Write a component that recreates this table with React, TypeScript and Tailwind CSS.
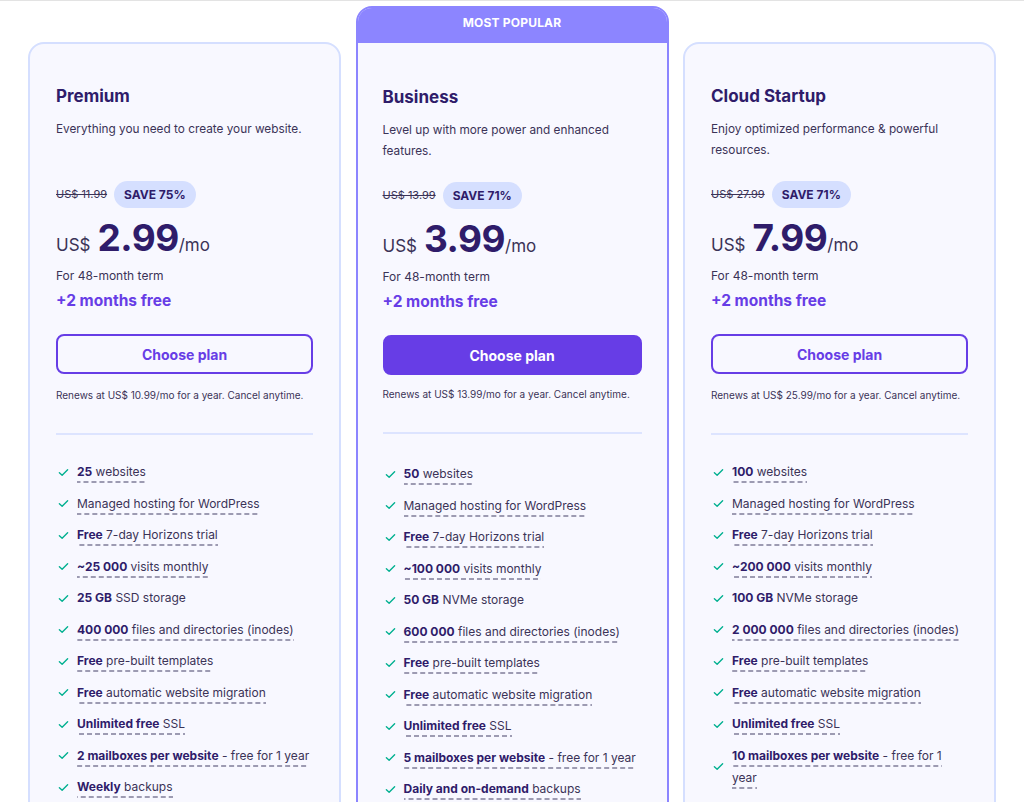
import React from "react";

type Feat = { b?: string; r?: string; u?: boolean };

type Plan = {
  name: string;
  desc: string;
  old: string;
  save: string;
  price: string;
  renew: string;
  features: Feat[];
  popular?: boolean;
};

const plans: Plan[] = [
  {
    name: "Premium",
    desc: "Everything you need to create your website.",
    old: "US$ 11.99",
    save: "SAVE 75%",
    price: "2.99",
    renew: "Renews at US$ 10.99/mo for a year. Cancel anytime.",
    features: [
      { b: "25", r: " websites", u: true },
      { r: "Managed hosting for WordPress", u: true },
      { b: "Free", r: " 7-day Horizons trial", u: true },
      { b: "~25 000", r: " visits monthly", u: true },
      { b: "25 GB", r: " SSD storage", u: false },
      { b: "400 000", r: " files and directories (inodes)", u: true },
      { b: "Free", r: " pre-built templates", u: true },
      { b: "Free", r: " automatic website migration", u: true },
      { b: "Unlimited free", r: " SSL", u: true },
      { b: "2 mailboxes per website", r: " - free for 1 year", u: true },
      { b: "Weekly", r: " backups", u: true },
    ],
  },
  {
    name: "Business",
    desc: "Level up with more power and enhanced features.",
    old: "US$ 13.99",
    save: "SAVE 71%",
    price: "3.99",
    renew: "Renews at US$ 13.99/mo for a year. Cancel anytime.",
    popular: true,
    features: [
      { b: "50", r: " websites", u: true },
      { r: "Managed hosting for WordPress", u: true },
      { b: "Free", r: " 7-day Horizons trial", u: true },
      { b: "~100 000", r: " visits monthly", u: true },
      { b: "50 GB", r: " NVMe storage", u: false },
      { b: "600 000", r: " files and directories (inodes)", u: true },
      { b: "Free", r: " pre-built templates", u: true },
      { b: "Free", r: " automatic website migration", u: true },
      { b: "Unlimited free", r: " SSL", u: true },
      { b: "5 mailboxes per website", r: " - free for 1 year", u: true },
      { b: "Daily and on-demand", r: " backups", u: true },
    ],
  },
  {
    name: "Cloud Startup",
    desc: "Enjoy optimized performance & powerful resources.",
    old: "US$ 27.99",
    save: "SAVE 71%",
    price: "7.99",
    renew: "Renews at US$ 25.99/mo for a year. Cancel anytime.",
    features: [
      { b: "100", r: " websites", u: true },
      { r: "Managed hosting for WordPress", u: true },
      { b: "Free", r: " 7-day Horizons trial", u: true },
      { b: "~200 000", r: " visits monthly", u: true },
      { b: "100 GB", r: " NVMe storage", u: false },
      { b: "2 000 000", r: " files and directories (inodes)", u: true },
      { b: "Free", r: " pre-built templates", u: true },
      { b: "Free", r: " automatic website migration", u: true },
      { b: "Unlimited free", r: " SSL", u: true },
      { b: "10 mailboxes per website", r: " - free for 1 year", u: true },
      { b: "Daily", r: " backups", u: true },
    ],
  },
];

function Check() {
  return (
    <svg width="11" height="11" viewBox="0 0 12 12" fill="none" className="shrink-0">
      <path d="M1.5 6.2 L4.5 9 L10.5 3" stroke="#00b090" strokeWidth="1.5" strokeLinecap="round" strokeLinejoin="round" />
    </svg>
  );
}

function Card({ p }: { p: Plan }) {
  const pop = !!p.popular;
  return (
    <div
      className={
        pop
          ? "w-[313px] shrink-0 rounded-[16px] border-2 border-[#8c85ff] bg-[#f8f8ff] overflow-hidden mt-[5px]"
          : "w-[313px] shrink-0 rounded-[16px] border-2 border-[#d5dfff] bg-[#f8f8ff] overflow-hidden mt-[41px]"
      }
    >
      {pop && (
        <div className="h-[35px] pb-[5px] bg-[#8c85ff] flex items-center justify-center text-white text-[12px] font-bold tracking-[0.2px]">
          MOST POPULAR
        </div>
      )}
      <div className={pop ? "px-[25px] pt-[42px]" : "px-[26px] pt-[40px]"}>
        <div className="text-[17px] leading-[24px] font-bold text-[#2f1c6a]">{p.name}</div>
        <div className="mt-[11px] h-[41px] text-[11.8px] leading-[21px] text-[#3b3357]">{p.desc}</div>
        <div className="mt-[21px] flex items-center gap-[7px]">
          <span className="text-[11px] line-through text-[#3b3357]">{p.old}</span>
          <span className="h-[27px] px-[10px] rounded-full bg-[#d5dfff] text-[12px] font-bold text-[#2f1c6a] flex items-center">
            {p.save}
          </span>
        </div>
        <div className="mt-[6px] flex items-baseline text-[#2f1c6a]">
          <span className="text-[17px] text-[#3b3357]">US$</span>
          <span className="ml-[7px] text-[37px] leading-[48px] font-bold tracking-[-0.5px]">{p.price}</span>
          <span className="text-[17px] text-[#3b3357]">/mo</span>
        </div>
        <div className="mt-[5px] text-[12px] leading-[18px] text-[#3b3357]">For 48-month term</div>
        <div className="mt-[6px] text-[15.5px] leading-[20px] font-bold text-[#673de6]">+2 months free</div>
        <button
          className={
            pop
              ? "mt-[23px] w-full h-[40px] rounded-[8px] bg-[#673de6] border-2 border-[#673de6] text-white text-[14px] font-bold"
              : "mt-[23px] w-full h-[40px] rounded-[8px] bg-transparent border-2 border-[#673de6] text-[#673de6] text-[14px] font-bold"
          }
        >
          Choose plan
        </button>
        <div className={pop ? "mt-[12px] text-[10px] leading-[14px] text-[#3b3357]" : "mt-[14px] text-[10px] leading-[14px] text-[#3b3357]"}>
          {p.renew}
        </div>
        <div className="mt-[31px] h-[2px] bg-[#dde4ff]" />
        <ul className={pop ? "mt-[29px] flex flex-col gap-[9.5px] pb-[40px]" : "mt-[26px] flex flex-col gap-[9.5px] pb-[40px]"}>
          {p.features.map((f, i) => (
            <li key={i} className="flex items-center gap-[8px] pl-[2px] text-[12px] leading-[22px] text-[#3b3357]">
              <Check />
              <span>
                <span
                  className={
                    f.u
                      ? "pb-[4px] bg-[linear-gradient(to_right,#9d9bb2_5px,transparent_5px)] bg-[length:8px_2px] bg-bottom bg-repeat-x"
                      : ""
                  }
                >
                  {f.b && <b className="font-bold text-[#2f1c6a]">{f.b}</b>}
                  {f.r}
                </span>
              </span>
            </li>
          ))}
        </ul>
      </div>
    </div>
  );
}

export default function App() {
  return (
    <div className="h-[802px] overflow-hidden bg-white border-t border-[#e3e3e3] font-['Inter',sans-serif]">
      <div className="flex items-start pl-[28px] gap-[14.5px]">
        {plans.map((p) => (
          <Card key={p.name} p={p} />
        ))}
      </div>
    </div>
  );
}
